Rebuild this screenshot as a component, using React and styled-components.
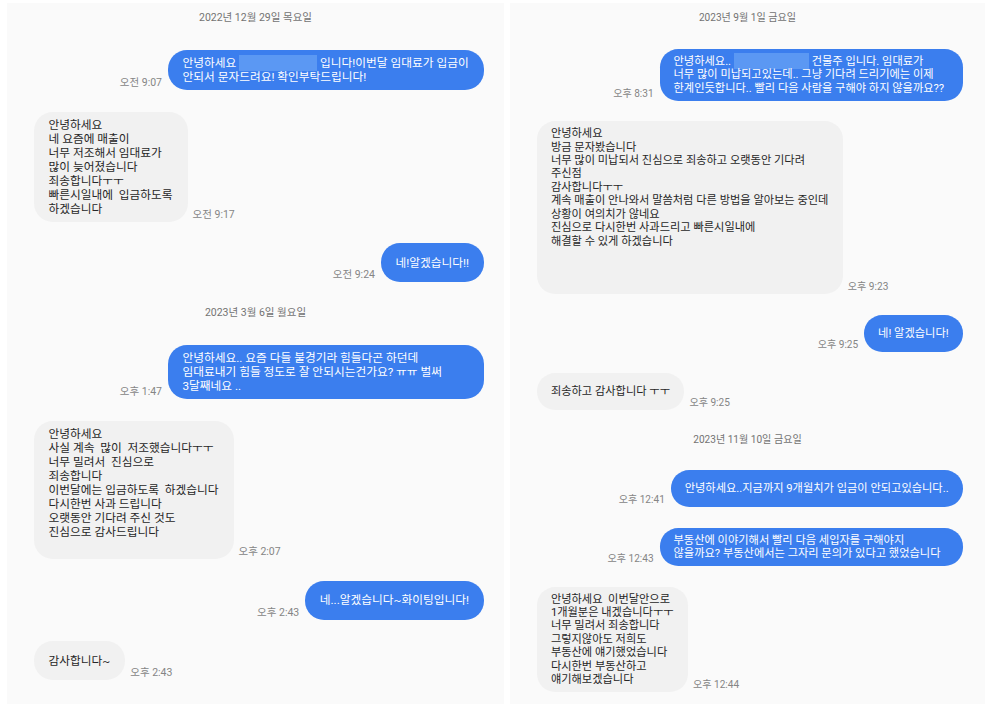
import styled, { createGlobalStyle } from "styled-components";

const GlobalStyle = createGlobalStyle`
  html, body {
    margin: 0;
    padding: 0;
    background: #ffffff;
  }
  body {
    font-family: "Roboto", "Noto Sans CJK KR", sans-serif;
  }
`;

const leftChat = [
  { type: "date", text: "2022년 12월 29일 목요일" },
  {
    type: "sent",
    wide: true,
    time: "오전 9:07",
    lines: [["안녕하세요 ", { redact: 78 }, " 입니다!이번달 임대료가 입금이"], "안되서 문자드려요! 확인부탁드립니다!"],
  },
  {
    type: "recv",
    time: "오전 9:17",
    lines: ["안녕하세요", "네 요즘에 매출이", "너무 저조해서 임대료가", "많이 늦어졌습니다", "죄송합니다ㅜㅜ", "빠른시일내에  입금하도록", "하겠습니다"],
  },
  { type: "sent", time: "오전 9:24", lines: ["네!알겠습니다!!"] },
  { type: "date", text: "2023년 3월 6일 월요일" },
  {
    type: "sent",
    wide: true,
    time: "오후 1:47",
    lines: ["안녕하세요.. 요즘 다들 불경기라 힘들다곤 하던데", "임대료내기 힘들 정도로 잘 안되시는건가요? ㅠㅠ 벌써", "3달째네요 .."],
  },
  {
    type: "recv",
    time: "오후 2:07",
    lines: ["안녕하세요", "사실 계속  많이  저조했습니다ㅜㅜ", "너무 밀려서  진심으로", "죄송합니다", "이번달에는 입금하도록  하겠습니다", "다시한번 사과 드립니다", "오랫동안 기다려 주신 것도", "진심으로 감사드립니다", ""],
  },
  { type: "sent", time: "오후 2:43", lines: ["네...알겠습니다~화이팅입니다!"] },
  { type: "recv", time: "오후 2:43", lines: ["감사합니다~"] },
];

const rightChat = [
  { type: "date", text: "2023년 9월 1일 금요일" },
  {
    type: "sent",
    wide: true,
    time: "오후 8:31",
    lines: [["안녕하세요.. ", { redact: 75 }, " 건물주 입니다. 임대료가"], "너무 많이 미납되고있는데.. 그냥 기다려 드리기에는 이제", "한계인듯합니다.. 빨리 다음 사람을 구해야 하지 않을까요??"],
  },
  {
    type: "recv",
    time: "오후 9:23",
    lines: ["안녕하세요", "방금 문자봤습니다", "너무 많이 미납되서 진심으로 죄송하고 오랫동안 기다려", "주신점", "감사합니다ㅜㅜ", "계속 매출이 안나와서 말씀처럼 다른 방법을 알아보는 중인데", "상황이 여의치가 않네요", "진심으로 다시한번 사과드리고 빠른시일내에", "해결할 수 있게 하겠습니다", "", "", ""],
  },
  { type: "sent", time: "오후 9:25", lines: ["네! 알겠습니다!"] },
  { type: "recv", time: "오후 9:25", lines: ["죄송하고 감사합니다 ㅜㅜ"] },
  { type: "date", text: "2023년 11월 10일 금요일" },
  { type: "sent", time: "오후 12:41", lines: ["안녕하세요..지금까지 9개월치가 입금이 안되고있습니다.."] },
  {
    type: "sent",
    wide: true,
    time: "오후 12:43",
    lines: ["부동산에 이야기해서 빨리 다음 세입자를 구해야지", "않을까요? 부동산에서는 그자리 문의가 있다고 했었습니다"],
  },
  {
    type: "recv",
    time: "오후 12:44",
    lines: ["안녕하세요  이번달안으로", "1개월분은 내겠습니다ㅜㅜ", "너무 밀려서 죄송합니다", "그렇지않아도 저희도", "부동산에 얘기했었습니다", "다시한번 부동산하고", "얘기해보겠습니다"],
  },
];

const Line = ({ line }) => {
  if (typeof line === "string") return <TextLine>{line || "\u00a0"}</TextLine>;
  return (
    <TextLine>
      {line.map((part, i) =>
        typeof part === "string" ? <span key={i}>{part}</span> : <Redact key={i} style={{ width: part.redact }} />
      )}
    </TextLine>
  );
};

const ChatPanel = ({ items, $scale, $padRight, $width, $gap }) => (
  <Panel $scale={$scale} $padRight={$padRight} $width={$width} $gap={$gap}>
    {items.map((item, i) => {
      if (item.type === "date") return <DateLabel key={i}>{item.text}</DateLabel>;
      const sent = item.type === "sent";
      return (
        <Row key={i} $sent={sent}>
          {sent && <Time $sent>{item.time}</Time>}
          <Bubble $sent={sent} $wide={item.wide}>
            <BubbleText>
              {item.lines.map((l, j) => (
                <Line key={j} line={l} />
              ))}
            </BubbleText>
          </Bubble>
          {!sent && <Time>{item.time}</Time>}
        </Row>
      );
    })}
  </Panel>
);

const App = () => (
  <>
    <GlobalStyle />
    <Page>
      <ChatPanel items={leftChat} $scale={1} $padRight={20} $width={497} $gap={21.8} />
      <ChatPanel items={rightChat} $scale={0.96} $padRight={22} $width={475} $gap={20.5} />
    </Page>
  </>
);

const Page = styled.div`
  display: flex;
  gap: 6px;
  padding: 3px 0 0 7px;
  width: 985px;
  height: 716px;
  box-sizing: border-box;
  overflow: hidden;
`;

const Panel = styled.div`
  --s: ${(p) => p.$scale};
  --pr: ${(p) => p.$padRight}px;
  width: ${(p) => p.$width}px;
  height: 701px;
  box-sizing: border-box;
  background: #fafafa;
  padding-top: 6px;
  display: flex;
  flex-direction: column;
  gap: ${(p) => p.$gap}px;
  flex-shrink: 0;
`;

const DateLabel = styled.div`
  text-align: center;
  font-size: calc(10.5px * var(--s));
  line-height: 14px;
  color: #737373;
  margin: 2px 0 3px;
`;

const Row = styled.div`
  display: flex;
  justify-content: ${(p) => (p.$sent ? "flex-end" : "flex-start")};
  align-items: flex-end;
  gap: ${(p) => (p.$sent ? "6px" : "5px")};
  padding: 0 var(--pr) 0 27px;
`;

const Time = styled.div`
  font-size: calc(10.5px * var(--s));
  line-height: 12px;
  color: #858585;
  white-space: nowrap;
  padding-bottom: 1px;
`;

const Bubble = styled.div`
  display: flex;
  align-items: center;
  box-sizing: border-box;
  width: ${(p) => (p.$wide ? "calc(316px * var(--s))" : "auto")};
  min-height: calc(39px * var(--s));
  padding: calc(6px * var(--s)) calc(15px * var(--s)) calc(6px * var(--s)) calc(14.5px * var(--s));
  border-radius: calc(19px * var(--s));
  background: ${(p) => (p.$sent ? "#3b7eee" : "#f1f1f1")};
  color: ${(p) => (p.$sent ? "#ffffff" : "#262626")};
`;

const BubbleText = styled.div`
  font-size: calc(11.7px * var(--s));
  line-height: calc(14px * var(--s));
  white-space: pre;
`;

const TextLine = styled.div`
  display: flex;
  align-items: center;
`;

const Redact = styled.span`
  display: inline-block;
  height: 16px;
  background: #5b98f3;
  margin: -1px 0;
`;

export default App;
